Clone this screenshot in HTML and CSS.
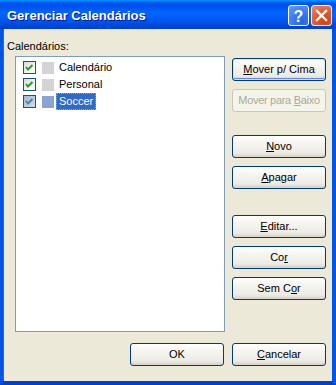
FILE: index.html
```html
<!DOCTYPE html>
<html>
<head>
<meta charset="utf-8">
<link rel="stylesheet" href="styles.css">
</head>
<body>
<div class="window">
  <div class="titlebar">
    <span class="title">Gerenciar Calendários</span>
    <div class="caption-btns">
      <div class="cap help">
        <svg width="21" height="21" viewBox="0 0 21 21"><text x="10.5" y="16.5" text-anchor="middle" font-family="Liberation Sans, sans-serif" font-weight="bold" font-size="16" fill="#fff">?</text></svg>
      </div>
      <div class="cap close">
        <svg width="21" height="21" viewBox="0 0 21 21"><path d="M6 6 L15 15 M15 6 L6 15" stroke="#fff" stroke-width="2.4" stroke-linecap="square"/></svg>
      </div>
    </div>
  </div>
  <div class="client">
    <div class="main">
      <div class="left">
        <div class="label">Calendários:</div>
        <div class="list">
          <div class="row">
            <span class="check"><svg width="11" height="11" viewBox="0 0 11 11"><path d="M2 5 L4 7.5 L8.5 3" fill="none" stroke="#21A121" stroke-width="2"/></svg></span>
            <span class="swatch"></span>
            <span class="name">Calendário</span>
          </div>
          <div class="row">
            <span class="check"><svg width="11" height="11" viewBox="0 0 11 11"><path d="M2 5 L4 7.5 L8.5 3" fill="none" stroke="#21A121" stroke-width="2"/></svg></span>
            <span class="swatch"></span>
            <span class="name">Personal</span>
          </div>
          <div class="row">
            <span class="check sel"><svg width="11" height="11" viewBox="0 0 11 11"><path d="M2 5 L4 7.5 L8.5 3" fill="none" stroke="#3D8F9A" stroke-width="2"/></svg></span>
            <span class="swatch blue"></span>
            <span class="name selected">Soccer</span>
          </div>
        </div>
      </div>
      <div class="right">
        <button class="btn focus"><u>M</u>over p/ Cima</button>
        <button class="btn disabled g8 tight">Mover para <u>B</u>aixo</button>
        <button class="btn g23"><u>N</u>ovo</button>
        <button class="btn g8"><u>A</u>pagar</button>
        <button class="btn g26"><u>E</u>ditar...</button>
        <button class="btn g8">Co<u>r</u></button>
        <button class="btn g8">Sem C<u>o</u>r</button>
      </div>
    </div>
    <div class="bottom">
      <button class="btn">OK</button>
      <button class="btn"><u>C</u>ancelar</button>
    </div>
  </div>
</div>
</body>
</html>
```
FILE: styles.css
```css
html, body {
  margin: 0;
  padding: 0;
  background: #ECE9D8;
}
.window {
  width: 336px;
  height: 385px;
  display: flex;
  flex-direction: column;
  font-family: "Liberation Sans", Arial, sans-serif;
  font-size: 11px;
  color: #000;
}
.titlebar {
  height: 29px;
  flex: none;
  display: flex;
  align-items: center;
  justify-content: space-between;
  background: linear-gradient(to bottom, #0997FF 0px, #0053EE 3px, #0050EE 6px, #0066FF 13px, #0058F2 20px, #0046D8 26px, #0040C8 29px);
  box-sizing: border-box;
  padding-left: 7px;
  padding-right: 4px;
}
.title {
  color: #fff;
  font-weight: bold;
  font-size: 13px;
  text-shadow: 1px 1px 0 #0A1883;
  padding-top: 1px;
}
.caption-btns {
  display: flex;
  gap: 2px;
  padding-top: 1px;
}
.cap {
  width: 21px;
  height: 21px;
  box-sizing: border-box;
  border: 1px solid #fff;
  border-radius: 3px;
  position: relative;
  overflow: hidden;
}
.cap svg {
  position: absolute;
  left: -1px;
  top: -1px;
}
.help {
  background: radial-gradient(circle at 70% 80%, #2A63E8 0%, #3C7CF6 50%, #6A9CFA 100%);
}
.close {
  background: radial-gradient(circle at 70% 80%, #CC4415 0%, #E2582E 50%, #EE8B6B 100%);
}
.client {
  flex: 1;
  display: flex;
  flex-direction: column;
  background: #ECE9D8;
  border-left: 3px solid #0055E5;
  border-right: 4px solid #0055E5;
  border-bottom: 4px solid #0040C8;
  box-shadow: inset 1px 0 0 #166AEE;
}
.main {
  display: flex;
  padding: 11px 0 0 4px;
}
.left {
  display: flex;
  flex-direction: column;
}
.label {
  line-height: 13px;
  height: 13px;
}
.list {
  margin: 3px 0 0 8px;
  width: 210px;
  height: 276px;
  box-sizing: border-box;
  border: 1px solid #7F9DB9;
  background: #fff;
  padding: 2px 0 0 7px;
}
.row {
  height: 17px;
  display: flex;
  align-items: center;
}
.check {
  width: 13px;
  height: 13px;
  box-sizing: border-box;
  border: 1px solid #1C5180;
  background: linear-gradient(135deg, #DCDCD7 0%, #F3F3EF 60%, #fff 100%);
  display: flex;
}
.check.sel {
  background: linear-gradient(135deg, #A9B8D8 0%, #C0CCE4 60%, #D2DAEC 100%);
}
.swatch {
  width: 12px;
  height: 12px;
  background: #D4D3D6;
  margin-left: 6px;
}
.swatch.blue {
  background: #8BA3D3;
}
.name {
  margin-left: 2px;
  padding: 1px 2px;
  line-height: 13px;
  border: 1px dotted transparent;
}
.name.selected {
  background: #316AC5;
  color: #fff;
  border-color: #C9A44A;
}
.right {
  display: flex;
  flex-direction: column;
  margin-left: 7px;
  padding-top: 18px;
}
.btn {
  width: 94px;
  height: 23px;
  box-sizing: border-box;
  border: 1px solid #003C74;
  border-radius: 3px;
  background: linear-gradient(to bottom, #FFFFFF 0%, #F4F3EE 40%, #ECEBE6 80%, #D6D0C5 100%);
  font-family: "Liberation Sans", Arial, sans-serif;
  font-size: 11px;
  color: #000;
  padding: 0;
  margin: 0;
  text-align: center;
  line-height: 19px;
  white-space: nowrap;
}
.btn.tight {
  letter-spacing: -0.3px;
}
.btn.focus {
  box-shadow: inset 0 0 0 1px #CEE7FF, inset 0 -1px 0 1px #6982EE;
}
.btn.disabled {
  border-color: #C9C7BA;
  background: #F5F4EA;
  color: #ACA899;
}
.g8 { margin-top: 8px; }
.g23 { margin-top: 23px; }
.g26 { margin-top: 26px; }
.bottom {
  display: flex;
  justify-content: flex-end;
  gap: 8px;
  padding-right: 6px;
  margin-top: 11px;
}
```
